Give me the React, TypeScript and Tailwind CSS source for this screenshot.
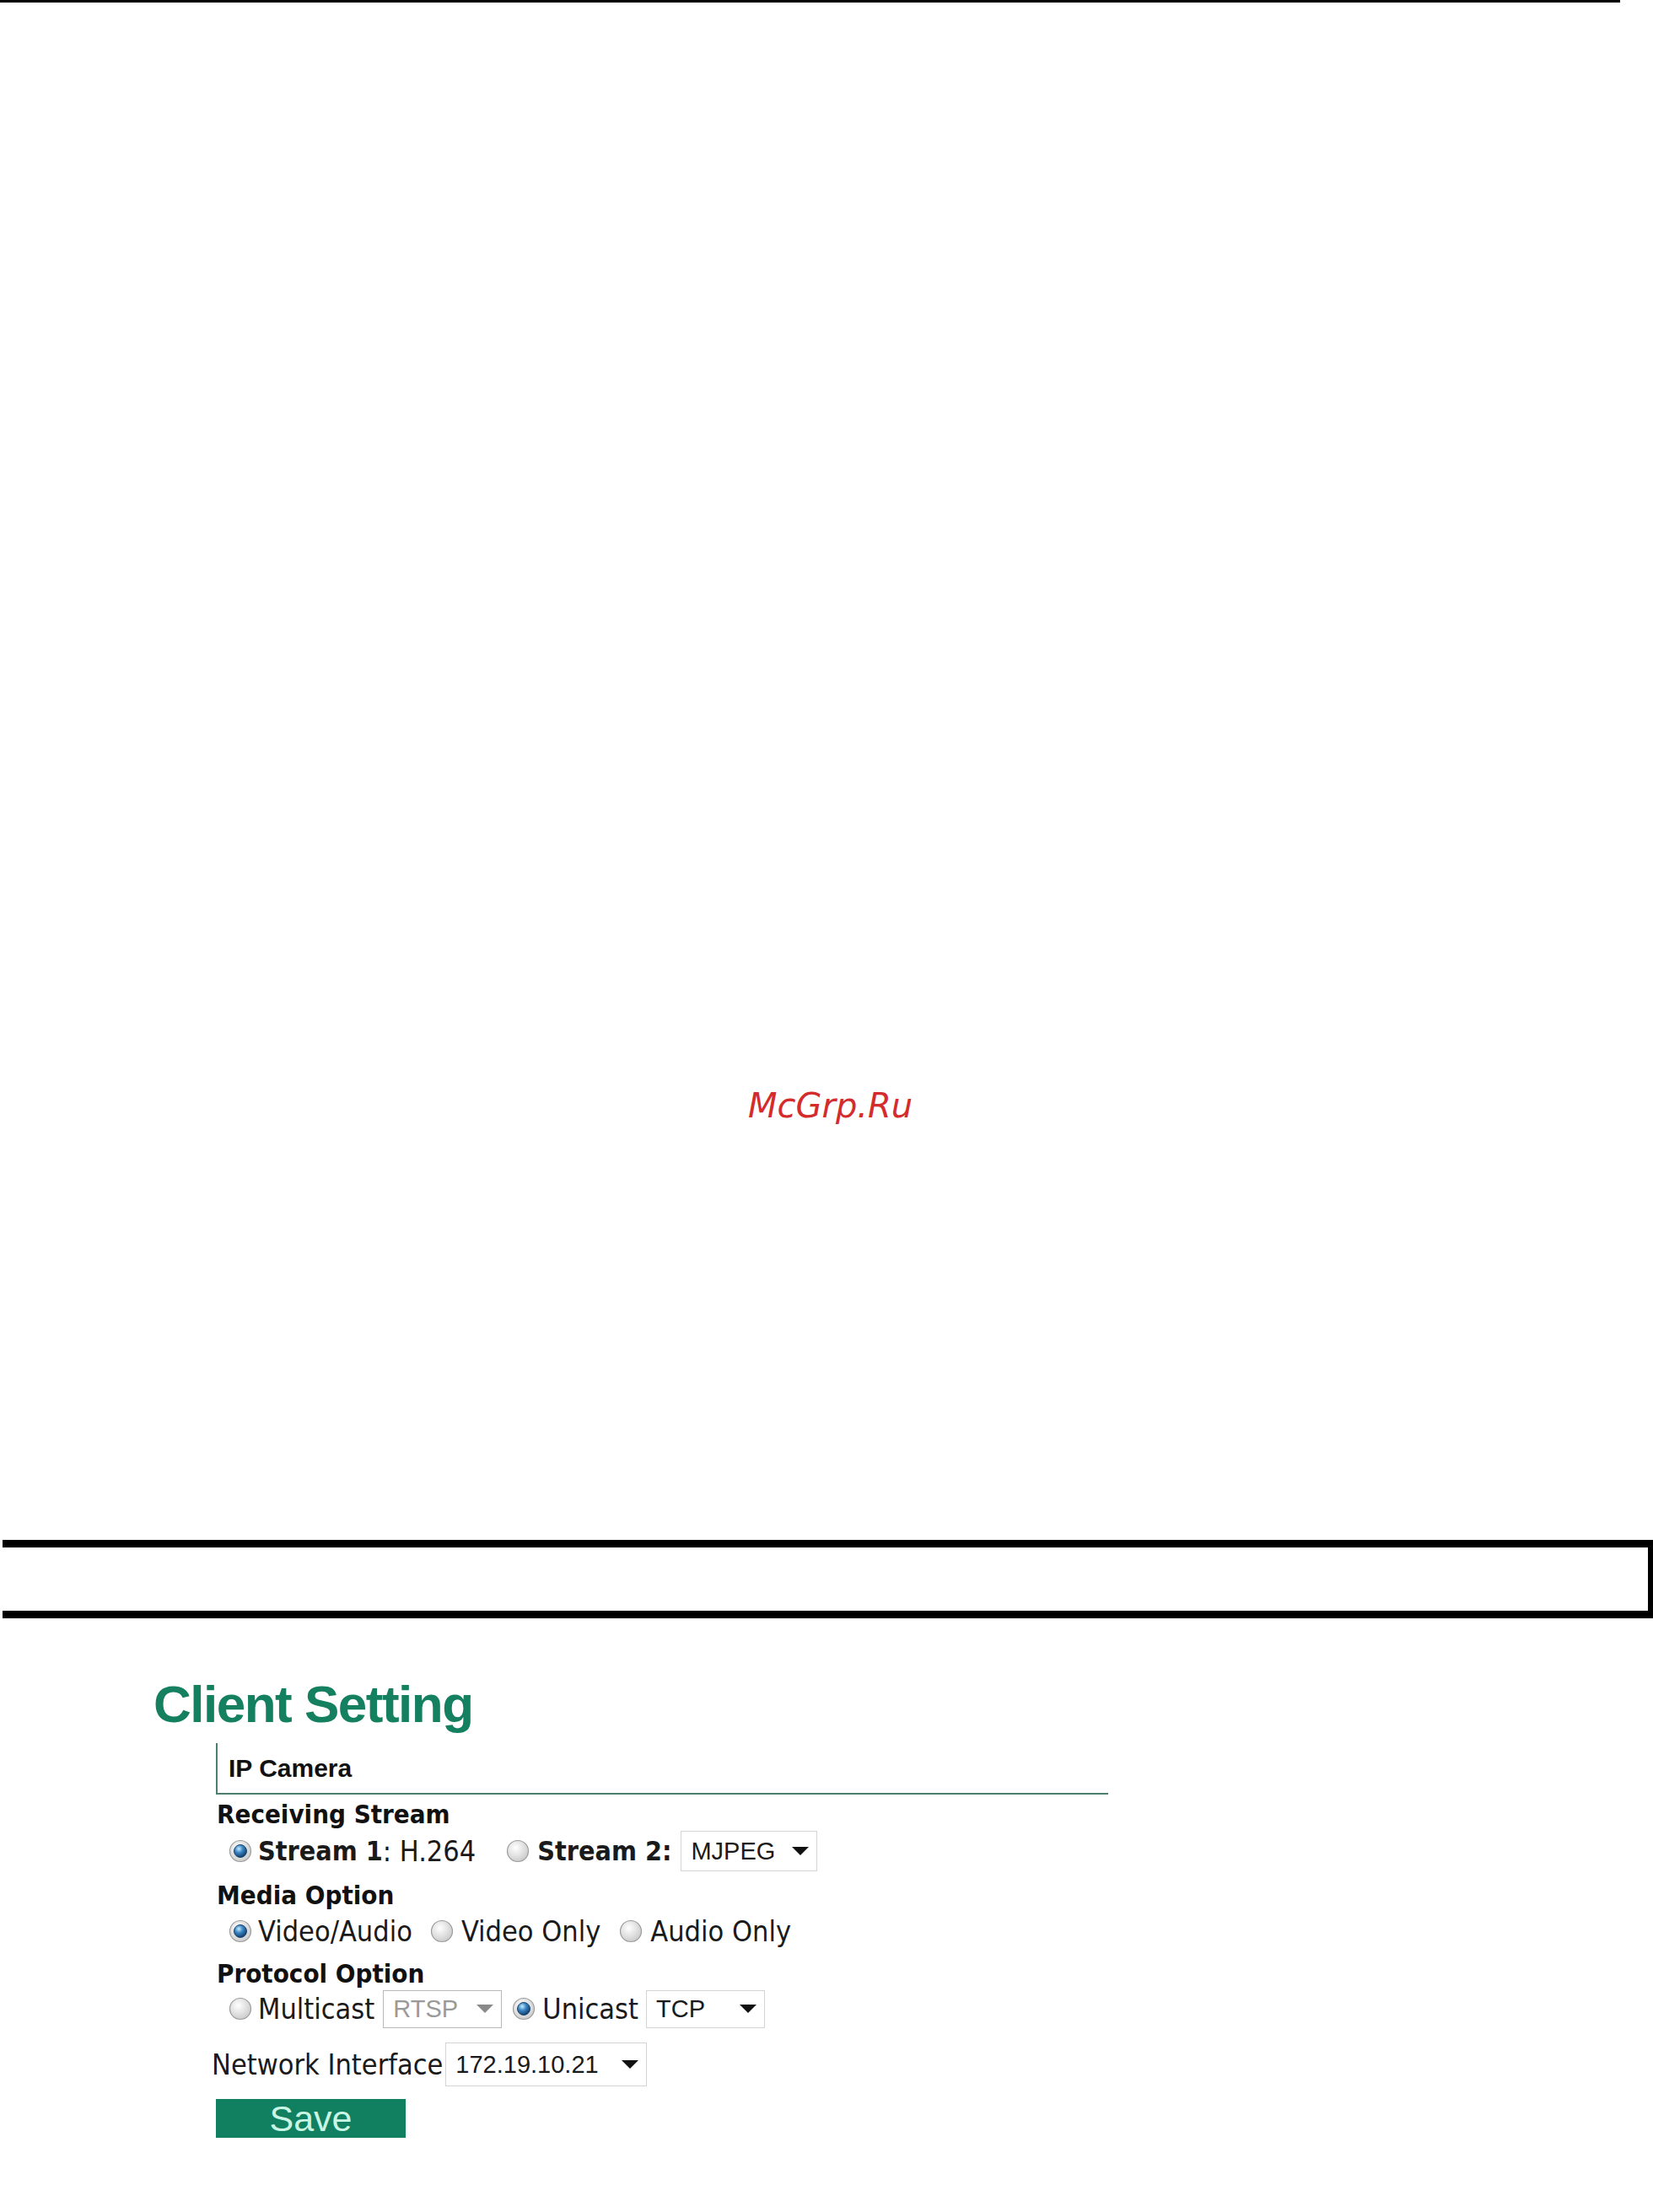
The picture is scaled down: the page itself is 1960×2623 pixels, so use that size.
import React from 'react';

const rowFont = "font-['DejaVu_Sans_Condensed','DejaVu_Sans',sans-serif] font-stretch-condensed";

function Radio({ checked }: { checked?: boolean }) {
  const id = checked ? 'radOn' : 'radOff';
  return (
    <svg width="28" height="28" viewBox="0 0 28 28" className="shrink-0">
      <defs>
        <radialGradient id={id + 'Bg'} cx="40%" cy="35%" r="70%">
          <stop offset="0%" stopColor="#ffffff" />
          <stop offset="100%" stopColor="#c9c9c9" />
        </radialGradient>
        <radialGradient id={id + 'Dot'} cx="38%" cy="32%" r="70%">
          <stop offset="0%" stopColor="#c6ecff" />
          <stop offset="45%" stopColor="#3b86c4" />
          <stop offset="100%" stopColor="#0e3a66" />
        </radialGradient>
      </defs>
      <circle cx="14" cy="14" r="12.5" fill={`url(#${id}Bg)`} stroke="#9c9c9c" strokeWidth="1.2" />
      {checked && <circle cx="14" cy="14" r="7.5" fill={`url(#${id}Dot)`} stroke="#1c4670" strokeWidth="1" />}
    </svg>
  );
}

function Select({ value, w, h, disabled }: { value: string; w: string; h: string; disabled?: boolean }) {
  return (
    <div
      className={`${w} ${h} flex items-center justify-between bg-white border pl-[11px] pr-[9px] font-['Liberation_Sans',Arial,sans-serif] text-[29px] leading-[29px] ${
        disabled ? 'border-[#b9b9b9] text-[#9a9a9a]' : 'border-[#d4d4d4] text-[#1a1a1a]'
      }`}
    >
      <span>{value}</span>
      <svg width="20" height="10" viewBox="0 0 20 10">
        <polygon points="0,0 20,0 10,10" fill={disabled ? '#8a8a8a' : '#111111'} />
      </svg>
    </div>
  );
}

function Header({ children, className = '' }: { children: React.ReactNode; className?: string }) {
  return (
    <div className={`h-[28px] text-[31px] leading-[28px] font-bold text-[#111] font-['DejaVu_Sans',sans-serif] ${className}`}>
      {children}
    </div>
  );
}

export default function App() {
  return (
    <div className="w-[1960px] h-[2623px] bg-white overflow-hidden">
      <div className="h-[3px] w-[1921px] bg-black" />

      <div className="mt-[1288px] pl-[887px] h-[40px] text-[40px] leading-[40px] italic text-[#d42c2c] font-['DejaVu_Sans',sans-serif]">
        McGrp.Ru
      </div>

      <div className="mt-[495px] ml-[3px] h-[93px] border-t-[9px] border-b-[9px] border-r-[6px] border-black" />

      <h1 className="mt-[71px] pl-[182px] h-[62px] text-[62px] leading-[62px] font-bold tracking-[-1.5px] text-[#14805f] font-['Liberation_Sans',Arial,sans-serif]">
        Client Setting
      </h1>

      <div className="mt-[15px] ml-[256px] w-[1058px] h-[61px] border-l-2 border-b-2 border-[#4b7f70] pl-[13px] pt-[15px]">
        <div className="text-[30px] leading-[29px] font-bold text-[#111] font-['Liberation_Sans',Arial,sans-serif]">IP Camera</div>
      </div>

      <div className={`pl-[257px] text-[34px] leading-[34px] text-[#1a1a1a] ${rowFont}`}>
        <Header className="mt-[9px]">Receiving Stream</Header>
        <div className="mt-[6px] h-[48px] flex items-center">
          <div className="ml-[14px]"><Radio checked /></div>
          <span className="ml-[7px] font-bold text-[32px]">Stream 1</span>
          <span>: H.264</span>
          <div className="ml-[36px]"><Radio /></div>
          <span className="ml-[9px] font-bold text-[32px]">Stream 2:</span>
          <div className="ml-[11px]"><Select value="MJPEG" w="w-[162px]" h="h-[48px]" /></div>
        </div>

        <Header className="mt-[14px]">Media Option</Header>
        <div className="mt-[5px] h-[48px] flex items-center">
          <div className="ml-[14px]"><Radio checked /></div>
          <span className="ml-[7px]">Video/Audio</span>
          <div className="ml-[21px]"><Radio /></div>
          <span className="ml-[9px]">Video Only</span>
          <div className="ml-[22px]"><Radio /></div>
          <span className="ml-[9px]">Audio Only</span>
        </div>

        <Header className="mt-[12px]">Protocol Option</Header>
        <div className="mt-[4px] h-[48px] flex items-center">
          <div className="ml-[14px]"><Radio /></div>
          <span className="ml-[7px]">Multicast</span>
          <div className="ml-[10px]"><Select value="RTSP" w="w-[141px]" h="h-[45px]" disabled /></div>
          <div className="ml-[12px]"><Radio checked /></div>
          <span className="ml-[8px]">Unicast</span>
          <div className="ml-[9px]"><Select value="TCP" w="w-[141px]" h="h-[45px]" /></div>
        </div>

        <div className="mt-[16px] h-[52px] flex items-center ml-[-6px]">
          <span>Network Interface</span>
          <div className="ml-[3px]"><Select value="172.19.10.21" w="w-[239px]" h="h-[52px]" /></div>
        </div>

        <div className="mt-[15px] ml-[-1px] w-[225px] h-[46px] bg-[#118061] flex items-center justify-center text-[43px] leading-[43px] text-[#c9f5e4] font-['Liberation_Sans',Arial,sans-serif]">
          Save
        </div>
      </div>
    </div>
  );
}
